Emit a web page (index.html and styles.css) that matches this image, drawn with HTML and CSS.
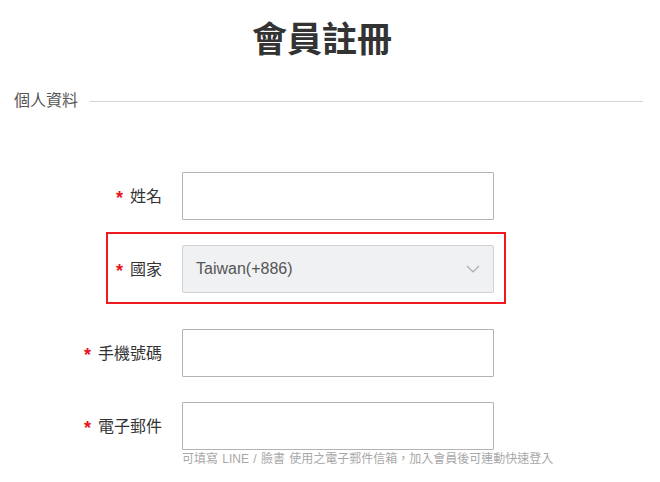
FILE: index.html
```html
<!DOCTYPE html>
<html lang="zh-Hant">
<head>
<meta charset="utf-8">
<title>會員註冊</title>
<link rel="stylesheet" href="styles.css">
</head>
<body>
<h1 class="title">會員註冊</h1>
<div class="section-head">
  <span class="section-name">個人資料</span>
  <span class="section-line"></span>
</div>
<form class="form">
  <div class="row row-name">
    <label class="label"><span class="req">*</span>姓名</label>
    <div class="field"><input class="input" type="text"></div>
  </div>
  <div class="row row-country">
    <label class="label"><span class="req">*</span>國家</label>
    <div class="field">
      <div class="select">
        <span class="select-value">Taiwan(+886)</span>
        <svg class="chev" width="14" height="8" viewBox="0 0 14 8"><path d="M1 1l6 6 6-6" fill="none" stroke="#a8abb2" stroke-width="1.2"/></svg>
      </div>
    </div>
  </div>
  <div class="row row-phone">
    <label class="label"><span class="req">*</span>手機號碼</label>
    <div class="field"><input class="input" type="text"></div>
  </div>
  <div class="row row-email">
    <label class="label"><span class="req">*</span>電子郵件</label>
    <div class="field"><input class="input" type="text"></div>
  </div>
  <div class="hint">可填寫 LINE&nbsp;/&nbsp;臉書 使用之電子郵件信箱，加入會員後可連動快速登入</div>
</form>
</body>
</html>
```
FILE: styles.css
```css
html, body {
  margin: 0;
  padding: 0;
  background: #fff;
  font-family: "Liberation Sans", "Noto Sans CJK TC", sans-serif;
  color: #333;
}
.title {
  margin: 20px 0 0;
  padding-right: 16px;
  height: 40px;
  line-height: 40px;
  font-size: 35px;
  font-weight: 700;
  text-align: center;
  color: #333;
}
.section-head {
  display: flex;
  align-items: center;
  gap: 12px;
  margin: 31px 17px 0 14px;
  height: 20px;
}
.section-name {
  font-size: 16px;
  line-height: 20px;
  color: #555;
}
.section-line {
  flex: 1;
  height: 1px;
  background: #d4d4d4;
}
.form {
  display: flex;
  flex-direction: column;
}
.row {
  display: flex;
  align-items: center;
  position: relative;
}
.row-name { margin-top: 61px; }
.row-country { margin-top: 25px; }
.row-phone { margin-top: 36px; }
.row-email { margin-top: 25px; }
.row-country::after {
  content: "";
  position: absolute;
  left: 106px;
  top: -13px;
  width: 400px;
  height: 72px;
  box-sizing: border-box;
  border: 2px solid #f0191e;
  pointer-events: none;
}
.label {
  width: 182px;
  box-sizing: border-box;
  padding-right: 20px;
  text-align: right;
  font-size: 16px;
  line-height: 20px;
  color: #333;
}
.req {
  color: #e8141c;
  margin-right: 7px;
  font-size: 18px;
  font-weight: 700;
  position: relative;
  top: 2px;
}
.field {
  width: 312px;
}
.input {
  display: block;
  width: 312px;
  height: 48px;
  box-sizing: border-box;
  border: 1px solid #b3b3b3;
  border-radius: 1px;
  background: #fff;
  margin: 0;
  padding: 0 14px;
  font-size: 16px;
}
.select {
  display: flex;
  align-items: center;
  justify-content: space-between;
  height: 48px;
  box-sizing: border-box;
  border: 1px solid #cfd1d6;
  border-radius: 2px;
  background: #f0f1f3;
  padding: 0 13px 0 13px;
}
.select-value {
  font-size: 16px;
  color: #555;
}
.chev { display: block; }
.hint {
  margin: 1px 0 0 182px;
  font-size: 12px;
  line-height: 16px;
  color: #a8a8a8;
  white-space: nowrap;
  word-spacing: 1px;
}
```
